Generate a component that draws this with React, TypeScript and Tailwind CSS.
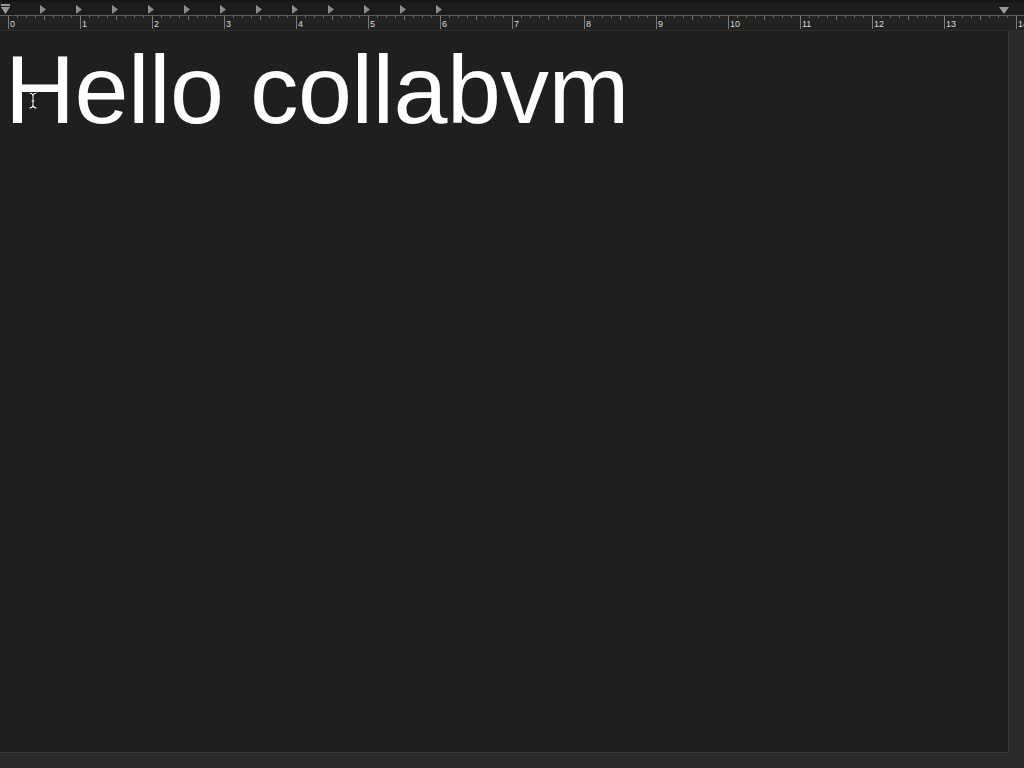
const INCH = 72;
const ORIGIN = 8;

function Ruler() {
  const ticks: { x: number; len: number }[] = [];
  for (let i = 0; i <= 14 * 8; i++) {
    const x = ORIGIN + (i * INCH) / 8;
    if (x > 1022) break;
    if (i % 8 === 0) continue;
    ticks.push({ x, len: i % 4 === 0 ? 4 : 2 });
  }
  const tabs: number[] = [];
  for (let i = 1; i <= 12; i++) tabs.push(ORIGIN + (i * INCH) / 2);

  return (
    <svg width={1024} height={31} className="block shrink-0" style={{ fontFamily: '"Liberation Sans", Arial, sans-serif' }}>
      <rect x={0} y={0} width={1024} height={31} fill="#222222" />
      <rect x={0} y={0} width={1024} height={2} fill="#141414" />
      <rect x={0} y={2} width={1024} height={13} fill="#1c1c1c" />
      <rect x={0} y={15} width={1024} height={1} fill="#5c5c5c" />
      {ticks.map((t) => (
        <rect key={t.x} x={Math.round(t.x)} y={16} width={1} height={t.len} fill="#6a6a6a" />
      ))}
      {Array.from({ length: 15 }).map((_, i) => {
        const x = ORIGIN + i * INCH;
        return (
          <g key={i}>
            <rect x={x} y={16} width={1} height={13} fill="#7a7a7a" />
            <text x={x + 2} y={27} fontSize={9} fill="#d8d8d8">
              {i}
            </text>
          </g>
        );
      })}
      {tabs.map((x) => (
        <path key={x} d={`M${x - 4} 5 L${x + 2} 9.5 L${x - 4} 14 Z`} fill="#8a8a8a" />
      ))}
      <rect x={1} y={4} width={9} height={2} fill="#9a9a9a" />
      <path d="M1 7 L10 7 L5.5 14 Z" fill="#9a9a9a" />
      <path d="M999 7 L1009 7 L1004 14 Z" fill="#9a9a9a" />
      <rect x={0} y={30} width={1024} height={1} fill="#2e2e2e" />
    </svg>
  );
}

const BEAM =
  "M1.5 1 C3.5 1 4.5 2 5 3.5 C5.5 2 6.5 1 8.5 1 M5 3.5 L5 13.5 C4.5 15 3.5 16 1.5 16 M5 13.5 C5.5 15 6.5 16 8.5 16 M3.5 9 L6.5 9";

function Cursor() {
  return (
    <svg width={10} height={17} viewBox="0 0 10 17" className="absolute left-[28px] top-[61px]">
      <path d={BEAM} fill="none" stroke="#000" strokeWidth={2.6} />
      <path d={BEAM} fill="none" stroke="#fff" strokeWidth={1.1} />
    </svg>
  );
}

export default function App() {
  return (
    <div className="flex h-[768px] w-[1024px] flex-col overflow-hidden bg-[#2b2b2b]">
      <Ruler />
      <div className="flex flex-1">
        <div className="relative mb-[15px] flex-1 border-b border-r border-[#3c3c3c] bg-[#1f1f1f]">
          <p className="pl-[5px] pt-[10px] font-['Liberation_Sans',Arial,sans-serif] text-[97px] leading-[97px] tracking-[-0.5px] text-white">
            Hello collabvm
          </p>
          <Cursor />
        </div>
        <div className="w-[15px] bg-[#2b2b2b]" />
      </div>
    </div>
  );
}
